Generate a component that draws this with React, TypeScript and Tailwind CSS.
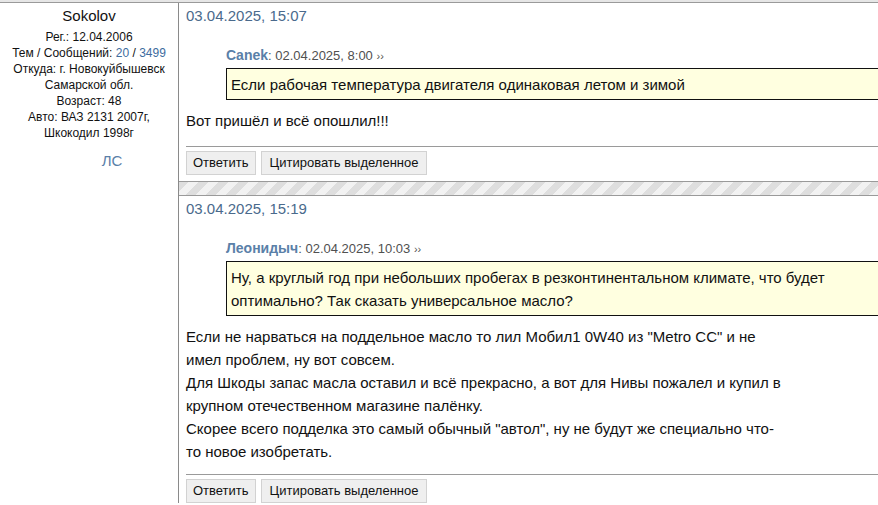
import React from "react";

const font = { fontFamily: '"Liberation Sans", Arial, sans-serif' };

function Stripe() {
  return (
    <div className="h-[15px] border-y border-[#9a9a9a] bg-[repeating-linear-gradient(135deg,#dedede_0px,#dedede_7px,#f2f2f2_7px,#f2f2f2_14px)]" />
  );
}

function Buttons() {
  return (
    <div className="mt-[4px] flex gap-[5px]">
      <div className="h-[24px] border border-[#d2d2d2] bg-[#efefef] px-[6px] text-[13px] leading-[22px] text-[#111]">
        Ответить
      </div>
      <div className="h-[24px] border border-[#d2d2d2] bg-[#efefef] px-[8px] text-[13px] leading-[22px] text-[#111]">
        Цитировать выделенное
      </div>
    </div>
  );
}

function Post({
  date,
  author,
  qdate,
  quote,
  body,
  bodyMt,
  hrMt,
}: {
  date: string;
  author: string;
  qdate: string;
  quote: string[];
  body: string[];
  bodyMt: string;
  hrMt: string;
}) {
  return (
    <div className="pl-[7px]">
      <div className="pt-[3px] text-[15px] leading-[20px] text-[#4a6a8c]">{date}</div>
      <div className="ml-[40px] mt-[20px] text-[13px] leading-[18px] text-[#505050]">
        <span className="text-[14px] font-bold text-[#5a80a8]">{author}</span>: {qdate}{" "}
        <span className="text-[11px]">››</span>
      </div>
      <div className="ml-[40px] mt-[3px] border border-[#111] bg-[#ffffe0] pl-[4px] pt-[4px] pb-[3px] text-[15px] leading-[23px] text-[#111] whitespace-nowrap">
        {quote.map((l, i) => (
          <div key={i}>{l}</div>
        ))}
      </div>
      <div className={`${bodyMt} text-[15px] leading-[23px] text-[#111] whitespace-nowrap`}>
        {body.map((l, i) => (
          <div key={i}>{l}</div>
        ))}
      </div>
      <div className={`${hrMt} h-px bg-[#9a9a9a]`} />
      <Buttons />
    </div>
  );
}

export default function App() {
  return (
    <div className="w-[878px] h-[505px] overflow-hidden bg-white" style={font}>
      <div className="w-[920px]">
        <div className="h-[2px] bg-[#e6e6e6]" />
        <div className="h-px bg-[#9a9a9a]" />
        <div className="flex">
          <div className="w-[179px] shrink-0 border-r border-[#8a8a8a] text-center text-[#111]">
            <div className="pt-[3px] text-[15px] leading-[20px]">Sokolov</div>
            <div className="mt-[3px] text-[12px] leading-[16px]">
              <div>Рег.: 12.04.2006</div>
              <div>
                Тем / Сообщений: <span className="text-[#3d6c9e]">20</span> /{" "}
                <span className="text-[#3d6c9e]">3499</span>
              </div>
              <div>Откуда: г. Новокуйбышевск</div>
              <div>Самарской обл.</div>
              <div>Возраст: 48</div>
              <div>Авто: ВАЗ 2131 2007г,</div>
              <div>Шкокодил 1998г</div>
            </div>
            <div className="mt-[11px] pl-[46px] text-[15px] leading-[18px] text-[#5a80a8]">ЛС</div>
          </div>
          <div className="flex-1">
            <Post
              date="03.04.2025, 15:07"
              author="Canek"
              qdate="02.04.2025, 8:00"
              quote={["Если рабочая температура двигателя одинаковая летом и зимой"]}
              body={["Вот пришёл и всё опошлил!!!"]}
              bodyMt="mt-[9px]"
              hrMt="mt-[14px]"
            />
            <div className="mt-[6px]">
              <Stripe />
            </div>
            <Post
              date="03.04.2025, 15:19"
              author="Леонидыч"
              qdate="02.04.2025, 10:03"
              quote={[
                "Ну, а круглый год при небольших пробегах в резконтинентальном климате, что будет",
                "оптимально? Так сказать универсальное масло?",
              ]}
              body={[
                'Если не нарваться на поддельное масло то лил Мобил1 0W40 из "Metro CC" и не',
                "имел проблем, ну вот совсем.",
                "Для Шкоды запас масла оставил и всё прекрасно, а вот для Нивы пожалел и купил в",
                "крупном отечественном магазине палёнку.",
                'Скорее всего подделка это самый обычный "автол", ну не будут же специально что-',
                "то новое изобретать.",
              ]}
              bodyMt="mt-[9px]"
              hrMt="mt-[11px]"
            />
          </div>
        </div>
      </div>
    </div>
  );
}
